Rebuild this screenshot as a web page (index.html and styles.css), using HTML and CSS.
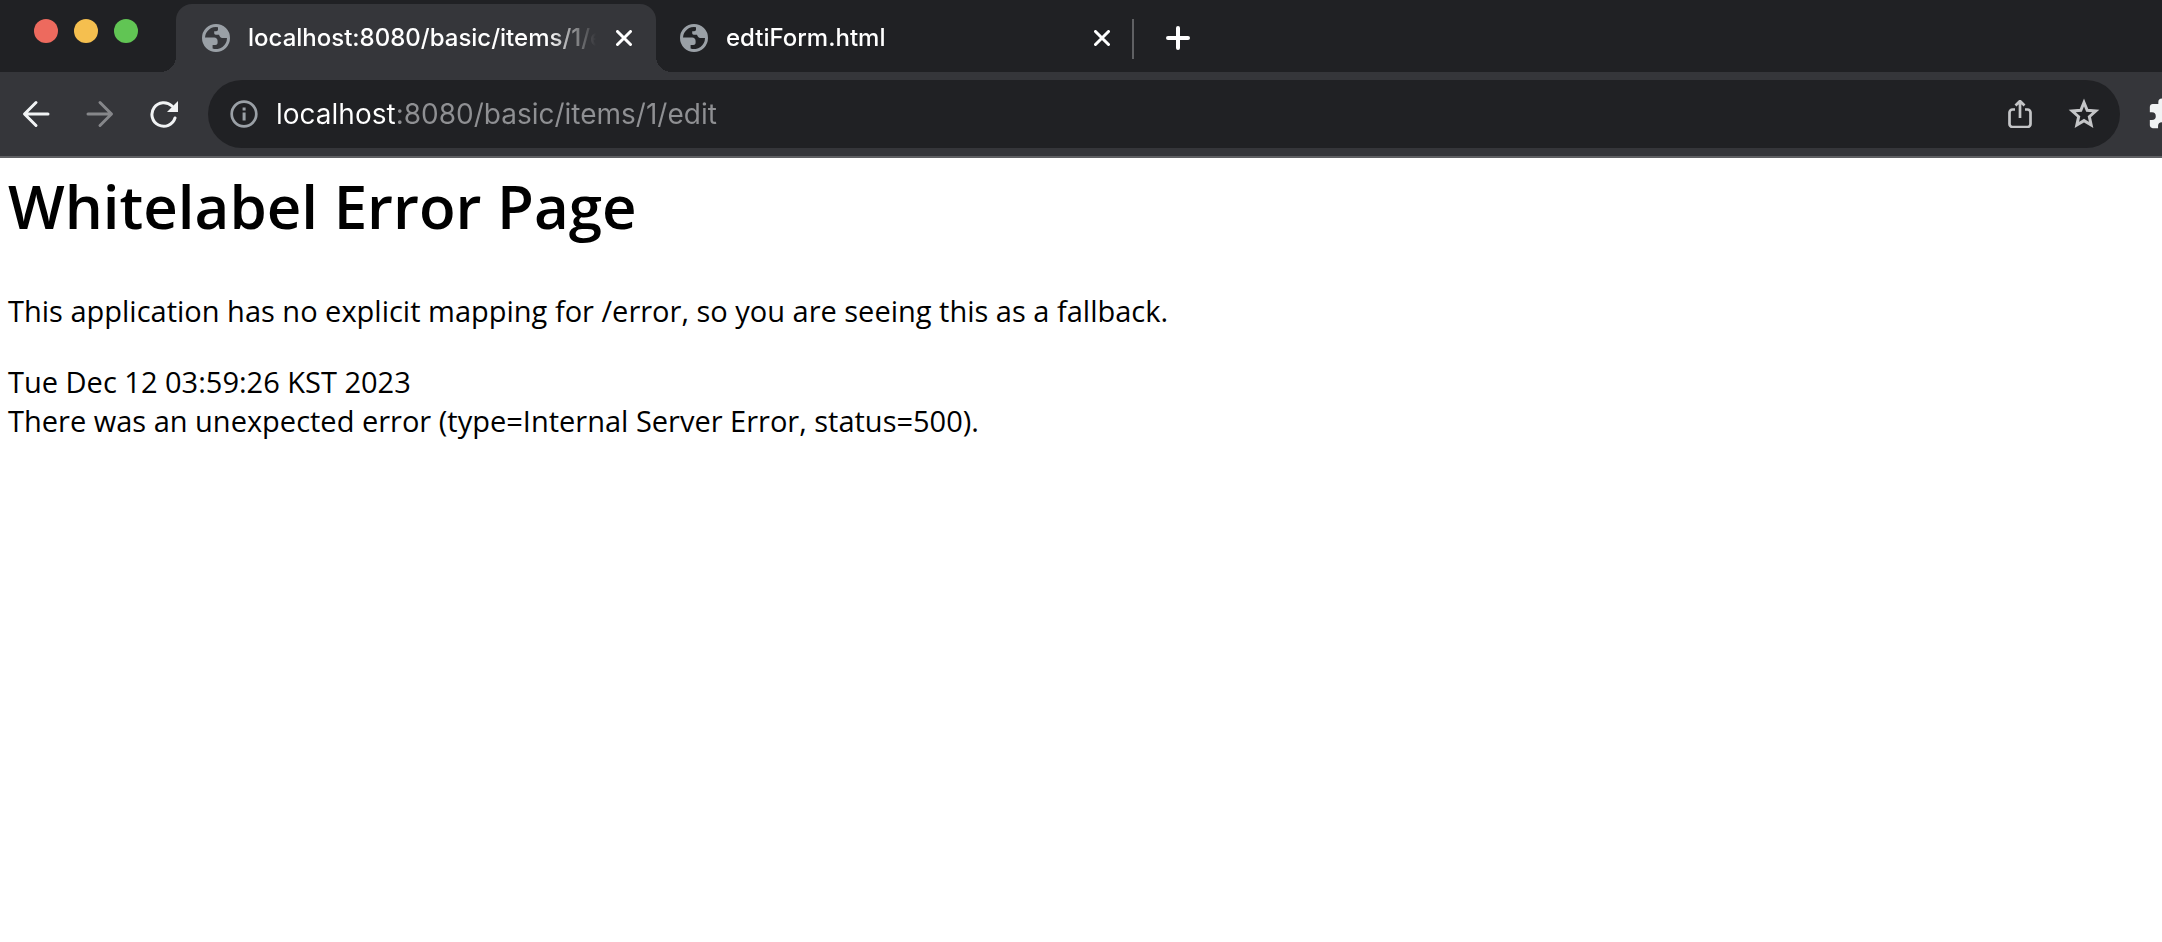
FILE: index.html
```html
<!DOCTYPE html>
<html lang="en">
<head>
<meta charset="utf-8">
<title>localhost:8080/basic/items/1/edit</title>
<link rel="stylesheet" href="styles.css">
</head>
<body>
<svg class="defs" aria-hidden="true">
  <symbol id="globe" viewBox="0 0 28 28">
    <path fill="currentColor" fill-rule="evenodd" d="M14 0a14 14 0 1 0 0 28a14 14 0 1 0 0-28zM3 13.6A11 11 0 0 1 16 3.2V5.500c0 1-.8 1.700-1.800 1.700H12.200V9c0 1 .5 1.700 1.500 1.700H17c.6 1.800 1.600 3.300 3.300 3.300h4.700A11 11 0 0 1 10.600 24.500V21h2.700c1.300 0 2.300-1 2.300-2.300v-1.800c0-2-1.500-3.300-3.400-3.300z"/>
  </symbol>
  <symbol id="close" viewBox="0 0 16 16">
    <path d="M1.500 1.500l13 13M14.500 1.500l-13 13" fill="none" stroke="currentColor" stroke-width="3" stroke-linecap="round"/>
  </symbol>
</svg>
<header class="browser">
  <div class="tabstrip">
    <div class="lights">
      <button class="light red" aria-label="Close window"></button>
      <button class="light yellow" aria-label="Minimize window"></button>
      <button class="light green" aria-label="Zoom window"></button>
    </div>
    <div class="tab active">
      <svg class="favicon"><use href="#globe"/></svg>
      <span class="title">localhost:8080/basic/items/1/edit</span>
      <button class="close" aria-label="Close tab"><svg><use href="#close"/></svg></button>
    </div>
    <div class="tab">
      <svg class="favicon"><use href="#globe"/></svg>
      <span class="title">edtiForm.html</span>
      <button class="close" aria-label="Close tab"><svg><use href="#close"/></svg></button>
    </div>
    <button class="newtab" aria-label="New tab">
      <svg viewBox="0 0 24 24"><path d="M12 2v20M2 12h20" fill="none" stroke="currentColor" stroke-width="4" stroke-linecap="round"/></svg>
    </button>
  </div>
  <div class="toolbar">
    <nav class="nav">
      <button class="tool" aria-label="Back">
        <svg viewBox="0 0 28 28"><path d="M26 14H3M14 2.500L2.500 14L14 25.500" fill="none" stroke="currentColor" stroke-width="3" stroke-linecap="round" stroke-linejoin="round"/></svg>
      </button>
      <button class="tool dim" aria-label="Forward">
        <svg viewBox="0 0 28 28"><path d="M2 14H25M14 2.500L25.500 14L14 25.500" fill="none" stroke="currentColor" stroke-width="3" stroke-linecap="round" stroke-linejoin="round"/></svg>
      </button>
      <button class="tool" aria-label="Reload">
        <svg viewBox="0 0 28 28"><path d="M25 18A11.800 11.800 0 1 1 22 6" fill="none" stroke="currentColor" stroke-width="3" stroke-linecap="round"/><path d="M28 1V12H17z" fill="currentColor"/></svg>
      </button>
    </nav>
    <div class="omnibox">
      <button class="tool info" aria-label="View site information">
        <svg viewBox="0 0 28 28"><circle cx="14" cy="14" r="12.300" fill="none" stroke="currentColor" stroke-width="2.700"/><path d="M12.600 12.500h3V20.500h-3zM12.600 7.500h3v3h-3z" fill="currentColor"/></svg>
      </button>
      <input class="url" type="text" aria-label="Address" value="localhost:8080/basic/items/1/edit">
      <button class="tool soft" aria-label="Share">
        <svg viewBox="0 0 28 28"><path d="M9 9.500H6.500a3 3 0 0 0-3 3V24a3 3 0 0 0 3 3H21.500a3 3 0 0 0 3-3V12.500a3 3 0 0 0-3-3H19M14 18V1.500M9.500 5.500L14 1L18.500 5.500" fill="none" stroke="currentColor" stroke-width="2.700"/></svg>
      </button>
      <button class="tool soft" aria-label="Bookmark this tab">
        <svg viewBox="0 0 30 30"><path d="M15 4.200L18 11.500L26 12.200L20 17.500L21.700 25.300L15 21.200L8.300 25.300L10 17.500L4 12.200L12 11.500z" fill="none" stroke="currentColor" stroke-width="2.800"/></svg>
      </button>
    </div>
    <button class="tool ext" aria-label="Extensions">
      <svg viewBox="0 0 24 24"><path fill="currentColor" d="M20.500 11H19V7c0-1.100-.9-2-2-2h-4V3.500a2.500 2.500 0 0 0-5 0V5H4c-1.100 0-2 .9-2 2v3.800h1.500a2.700 2.700 0 0 1 0 5.400H2V20c0 1.100.9 2 2 2h3.800v-1.500a2.700 2.700 0 0 1 5.400 0V22H17c1.100 0 2-.9 2-2v-4h1.500a2.500 2.500 0 0 0 0-5z"/></svg>
    </button>
  </div>
</header>
<main class="page">
  <h1>Whitelabel Error Page</h1>
  <p>This application has no explicit mapping for /error, so you are seeing this as a fallback.</p>
  <div>Tue Dec 12 03:59:26 KST 2023</div>
  <div>There was an unexpected error (type=Internal Server Error, status=500).</div>
</main>
</body>
</html>
```
FILE: styles.css
```css
* { box-sizing: border-box; }
body { margin: 0; background: #fff; color: #000; overflow-x: hidden; }
button { padding: 0; border: 0; background: none; color: inherit; flex: none; }
svg { display: block; flex: none; }
.defs { position: absolute; width: 0; height: 0; }

.browser { font-family: Inter, "Liberation Sans", sans-serif; color: #fff; overflow: hidden; }
.tabstrip { display: flex; height: 72px; padding-top: 4px; background: #202124; }
.lights { display: flex; gap: 16px; flex: none; width: 176px; padding: 15px 0 0 34px; }
.light { width: 24px; height: 24px; border-radius: 50%; }
.red { background: #ed6a5e; }
.yellow { background: #f5bf4f; }
.green { background: #61c554; }

.tab { position: relative; display: flex; align-items: center; flex: 0 1 480px; min-width: 0; padding: 0 24px 0 26px; }
.tab + .tab { flex-basis: 478px; padding: 0 24px; }
.tab + .tab::after { content: ""; position: absolute; right: 0; top: 15px; width: 2px; height: 40px; background: #5f6063; }
.active { background: #35363a; border-radius: 16px 16px 0 0; }
.active::before, .active::after { content: ""; position: absolute; bottom: 0; width: 16px; height: 16px; }
.active::before { right: 100%; background: radial-gradient(circle at 0 0, #202124 16px, #35363a 16px); }
.active::after { left: 100%; background: radial-gradient(circle at 100% 0, #202124 16px, #35363a 16px); }
.favicon { width: 28px; height: 28px; color: #9aa0a6; }
.title { flex: 1; min-width: 0; margin: 0 20px 0 18px; overflow: hidden; white-space: nowrap; font-size: 24px; line-height: 32px; font-weight: 500; -webkit-mask-image: linear-gradient(to left, transparent, #000 48px); mask-image: linear-gradient(to left, transparent, #000 48px); }
.close { width: 16px; height: 16px; }
.close svg { width: 16px; height: 16px; }
.newtab { margin: 0 0 0 32px; }
.newtab svg { width: 24px; height: 24px; }

.toolbar { display: flex; align-items: center; height: 86px; padding: 0 0 0 22px; background: #35363a; border-bottom: 2px solid #5f6063; }
.nav { display: flex; gap: 36px; color: #f1f3f4; }
.tool svg { width: 28px; height: 28px; }
.dim { color: #86878a; }
.omnibox { display: flex; align-items: center; flex: 1; min-width: 0; height: 68px; margin: 0 27px 0 30px; padding: 0 20px 0 22px; gap: 18px; border-radius: 34px; background: #202124; }
.info { color: #9aa0a6; }
.url { flex: 1; min-width: 0; height: 44px; padding: 0; border: 0; outline: 0; font: 400 28px/36px Inter, "Liberation Sans", sans-serif; color: #8f9093; background: linear-gradient(to right, #fff 119px, #8f9093 119px); -webkit-background-clip: text; background-clip: text; -webkit-text-fill-color: transparent; }
.soft { color: #c4c5c7; }
.soft + .soft { margin-left: 16px; }
.soft + .soft svg { width: 32px; height: 32px; }
.tool.ext { width: 15px; color: #f1f3f4; }
.tool.ext svg { width: 34px; height: 34px; }

.page { padding: 12px 8px; font-family: "Open Sans", "Noto Sans CJK KR", sans-serif; font-size: 29px; line-height: 39px; }
.page h1 { margin: 0 0 49px; font-size: 60px; line-height: 72px; font-weight: 600; }
.page p { margin: 0 0 32px; }
```
